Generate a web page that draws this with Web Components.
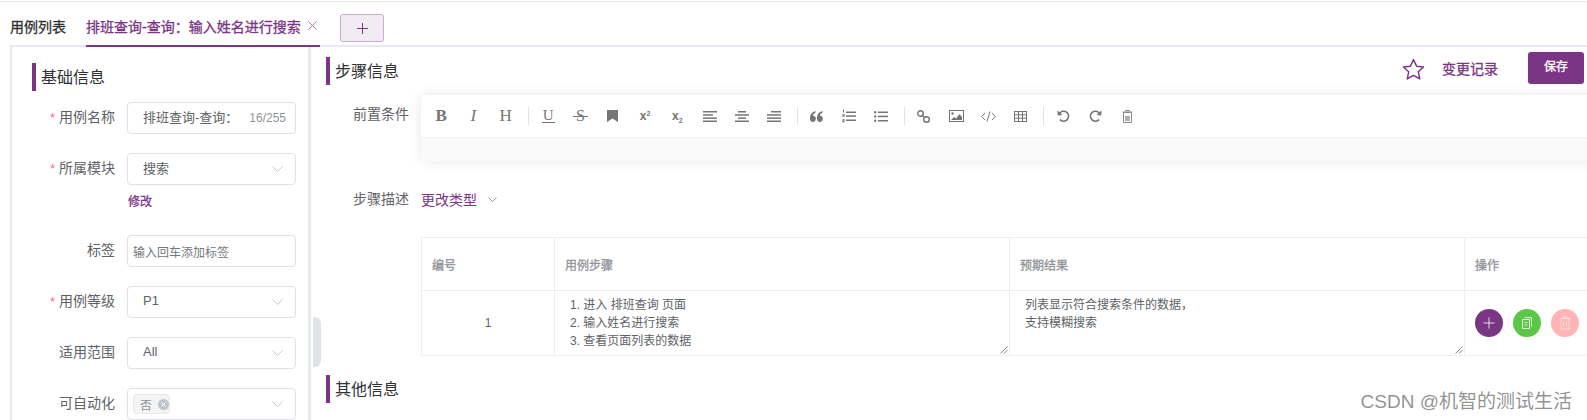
<!DOCTYPE html>
<html lang="zh-CN">
<head>
<meta charset="utf-8">
<title>用例详情</title>
<style>
	html, body { margin: 0; height: 420px; overflow: hidden; background: #fff; }
	body {
		position: relative;
		font-family: "Liberation Sans", "Noto Sans CJK SC", sans-serif;
		font-size: 14px;
		color: #606266;
	}
	case-main { height: 373px; }
</style>
</head>
<body>
<case-tabs></case-tabs>
<case-main>
	<case-side slot="side">
		<section-title>基础信息</section-title>
		<form-row label="用例名称" required>
			<field-box counter="16/255">排班查询-查询：</field-box>
		</form-row>
		<form-row label="所属模块" required>
			<field-box select>搜索</field-box>
			<div slot="extra" class="edit">修改</div>
		</form-row>
		<form-row label="标签">
			<field-box placeholder>输入回车添加标签</field-box>
		</form-row>
		<form-row label="用例等级" required>
			<field-box select>P1</field-box>
		</form-row>
		<form-row label="适用范围">
			<field-box select>All</field-box>
		</form-row>
		<form-row label="可自动化">
			<field-box select tag>否</field-box>
		</form-row>
	</case-side>
	<case-detail slot="detail"></case-detail>
</case-main>
<water-mark>CSDN @机智的测试生活</water-mark>

<script>
const PURPLE = '#7b3585';
// the CJK font has no medium weight here, a thin stroke gets close to it
const MEDIUM = '-webkit-text-stroke: 0.3px currentColor;';

class CaseTabs extends HTMLElement {
	connectedCallback() {
		this.attachShadow({ mode: 'open' });
		this.shadowRoot.innerHTML = `
			<style>
				:host { display: block; margin-top: 1px; border-top: 1px solid #e9e9ec; }
				.bar {
					display: flex;
					height: 45px;
					box-sizing: border-box;
					margin-left: 10px;
					border-bottom: 2px solid #e7e8f0;
				}
				.tab {
					display: flex;
					align-items: center;
					box-sizing: border-box;
					height: 45px;
					padding-top: 5px;
					padding-bottom: 2px;
					${MEDIUM}
					color: #303133;
				}
				.active {
					margin-left: 20px;
					width: 234px;
					gap: 7px;
					color: ${PURPLE};
					border-bottom: 2px solid ${PURPLE};
					padding-top: 6px;
				}
				.add {
					display: flex;
					align-items: center;
					justify-content: center;
					box-sizing: border-box;
					width: 44px;
					height: 28px;
					margin: 12px 0 0 20px;
					background: #f2ebf4;
					border: 1px solid #c9a9d0;
					border-radius: 3px;
				}
			</style>
			<div class="bar">
				<div class="tab">用例列表</div>
				<div class="tab active">
					<span>排班查询-查询：输入姓名进行搜索</span>
					<svg width="9" height="9" viewBox="0 0 9 9" fill="none" stroke="#a67bae" stroke-width="1"><path d="M.5.5l8 8M8.5.5l-8 8"/></svg>
				</div>
				<div class="add">
					<svg width="11" height="11" viewBox="0 0 11 11" fill="none" stroke="${PURPLE}" stroke-width="1"><path d="M5.5 0v11M0 5.5h11"/></svg>
				</div>
			</div>
		`;
	}
}

class CaseMain extends HTMLElement {
	connectedCallback() {
		this.attachShadow({ mode: 'open' });
		this.shadowRoot.innerHTML = `
			<style>
				:host { display: flex; overflow: hidden; }
				.handle {
					flex: none;
					width: 8px;
					height: 50px;
					margin: 270px 0 0 2px;
					background: #dfe3e8;
					border-radius: 2px 8px 8px 2px;
				}
				::slotted(case-detail) { flex: 1; min-width: 0; }
			</style>
			<slot name="side"></slot>
			<div class="handle"></div>
			<slot name="detail"></slot>
		`;
	}
}

class CaseSide extends HTMLElement {
	connectedCallback() {
		this.attachShadow({ mode: 'open' });
		this.shadowRoot.innerHTML = `
			<style>
				:host {
					display: block;
					flex: none;
					box-sizing: border-box;
					width: 301px;
					margin-left: 10px;
					padding-top: 16px;
					border-left: 2px solid #e8eaee;
					border-right: 3px solid #e8eaee;
					--title-indent: 20px;
				}
				::slotted(section-title) { margin-bottom: 11px; }
			</style>
			<slot></slot>
		`;
		// 修改 lives in light DOM, style it here
		const edit = this.querySelector('.edit');
		if (edit) {
			Object.assign(edit.style, {
				height: '31px', paddingTop: '8px', boxSizing: 'border-box', lineHeight: '18px',
				fontSize: '12px', webkitTextStroke: '0.3px currentColor', color: PURPLE, paddingLeft: '1px'
			});
		}
	}
}

class SectionTitle extends HTMLElement {
	connectedCallback() {
		this.attachShadow({ mode: 'open' });
		this.shadowRoot.innerHTML = `
			<style>
				:host {
					display: block;
					margin-left: var(--title-indent, 0);
					padding-left: 5px;
					height: 28px;
					font-size: 16px;
					color: #303133;
					border-left: 4px solid ${PURPLE};
				}
				span { display: block; line-height: 28px; padding-top: 1px; }
			</style>
			<span><slot></slot></span>
		`;
	}
}

class FormRow extends HTMLElement {
	connectedCallback() {
		this.attachShadow({ mode: 'open' });
		const star = this.hasAttribute('required') ? '<i>*</i>' : '';
		this.shadowRoot.innerHTML = `
			<style>
				:host {
					display: grid;
					grid-template-columns: 103px 169px;
					column-gap: 12px;
					margin-bottom: 19px;
				}
				label {
					height: 32px;
					line-height: 30px;
					text-align: right;
					color: #606266;
				}
				i { font-style: normal; color: #f56c6c; margin-right: 4px; font-size: 12px; }
				.extra { grid-column: 2; }
			</style>
			<label>${star}${this.getAttribute('label')}</label>
			<div><slot></slot></div>
			<div class="extra"><slot name="extra"></slot></div>
		`;
	}
}

class FieldBox extends HTMLElement {
	connectedCallback() {
		this.attachShadow({ mode: 'open' });
		const isSelect = this.hasAttribute('select');
		const counter = this.getAttribute('counter');
		const isTag = this.hasAttribute('tag');
		const isHolder = this.hasAttribute('placeholder');
		const text = isTag
			? `<span class="tag"><slot></slot><span class="x"><svg width="5" height="5" viewBox="0 0 5 5" stroke="#fff" fill="none"><path d="M.5.5l4 4M4.5.5l-4 4"/></svg></span></span>`
			: `<span class="txt"><slot></slot></span>`;
		this.shadowRoot.innerHTML = `
			<style>
				:host {
					display: flex;
					align-items: center;
					box-sizing: border-box;
					height: 32px;
					padding: 0 9px 0 ${isHolder || isTag ? 5 : 15}px;
					background: #fff;
					border: 1px solid #dfe0e8;
					border-radius: 4px;
					font-size: ${isHolder ? 12 : 13}px;
					color: ${isHolder ? '#75777c' : '#606266'};
				}
				.txt { flex: 1; white-space: nowrap; padding-bottom: ${isHolder ? 0 : 3}px; }
				.count { font-size: 12px; color: #909399; }
				.tag {
					display: flex;
					align-items: center;
					box-sizing: border-box;
					width: 37px;
					height: 20px;
					padding-left: 6px;
					font-size: 12px;
					color: #909399;
					background: #f4f4f5;
					border: 1px solid #e9e9eb;
					border-radius: 4px;
				}
				.x {
					display: flex;
					align-items: center;
					justify-content: center;
					width: 11px;
					height: 11px;
					margin-left: 6px;
					background: #c0c4cc;
					border-radius: 50%;
				}
				svg.arrow { margin: 0 3px 0 auto; flex: none; }
			</style>
			${text}
			${counter ? `<span class="count">${counter}</span>` : ''}
			${isSelect ? '<svg class="arrow" width="11" height="6" viewBox="0 0 11 6" fill="none" stroke="#c6c9d1"><path d="M.5.5l5 5 5-5"/></svg>' : ''}
		`;
	}
}

const ICON_COLOR = '#757575';
const svg = (w, h, body, extra = '') =>
	`<svg width="${w}" height="${h}" viewBox="0 0 ${w} ${h}" ${extra}>${body}</svg>`;
const lines = (rows) => rows.map(([x, y, l]) => `<rect x="${x}" y="${y}" width="${l}" height="1.5"/>`).join('');

const TOOL_ICONS = {
	b: `<span style="font:700 17px 'Liberation Serif',serif">B</span>`,
	i: `<span style="font:italic 17px 'Liberation Serif',serif">I</span>`,
	h: `<span style="font:17px 'Liberation Serif',serif">H</span>`,
	u: `<span style="font:15px 'Liberation Serif',serif;border-bottom:1.5px solid;line-height:13px;padding:0 1px">U</span>`,
	s: `<span style="font:16px 'Liberation Serif',serif;position:relative">S<span style="position:absolute;left:-3px;right:-3px;top:9px;height:1px;background:currentColor"></span></span>`,
	mark: svg(11, 12, '<path d="M0 0h11v12L5.500 8.500 0 12z"/>', `fill="${ICON_COLOR}"`),
	sup: `<span style="font:700 12px 'Liberation Sans',sans-serif">x<sup style="font-size:7px;vertical-align:4px;line-height:0">2</sup></span>`,
	sub: `<span style="font:700 12px 'Liberation Sans',sans-serif">x<sub style="font-size:7px;vertical-align:-3px;line-height:0">2</sub></span>`,
	left: svg(14, 11, lines([[0, 0, 14], [0, 3.2, 10], [0, 6.4, 14], [0, 9.500, 14]]), `fill="${ICON_COLOR}"`),
	center: svg(14, 11, lines([[3, 0, 8], [0, 3.2, 14], [3, 6.4, 8], [0, 9.500, 14]]), `fill="${ICON_COLOR}"`),
	right: svg(14, 11, lines([[4, 0, 10], [0, 3.2, 14], [0, 6.4, 14], [0, 9.500, 14]]), `fill="${ICON_COLOR}"`),
	quote: svg(13, 11, '<path d="M0 7.500C0 3.500 2 .8 5.500 0v1.800C3.900 2.500 3 3.500 2.900 4.700 4.700 4.600 5.800 5.900 5.800 7.800 5.800 9.700 4.500 11 2.900 11 1 11 0 9.500 0 7.500zM7 7.500C7 3.500 9 .8 12.500 0v1.800C10.900 2.500 10 3.500 9.900 4.700 11.700 4.600 12.800 5.900 12.800 7.800 12.800 9.700 11.500 11 9.900 11 8 11 7 9.500 7 7.500z"/>', `fill="${ICON_COLOR}"`),
	ol: svg(14, 14, lines([[4, 2.5, 10], [4, 6.3, 10], [4, 10.5, 10]]) +
		'<rect x="1" y="0.500" width="1" height="3"/><rect x="0.300" y="5" width="2.400" height="3" opacity=".75"/><rect x="0.300" y="10" width="2.400" height="3.500" opacity=".75"/>', `fill="${ICON_COLOR}"`),
	ul: svg(14, 11, lines([[4, 0.500, 10], [4, 4.700, 10], [4, 9, 10]]) +
		'<circle cx="1.200" cy="1.200" r="1.200"/><circle cx="1.200" cy="5.400" r="1.200"/><circle cx="1.200" cy="9.700" r="1.200"/>', `fill="${ICON_COLOR}"`),
	link: svg(13, 13, '<circle cx="3.500" cy="3.500" r="2.800"/><circle cx="9.500" cy="9.500" r="2.800"/><path d="M5.500 5.500l2 2"/>', `fill="none" stroke="${ICON_COLOR}" stroke-width="1.400"`),
	image: svg(15, 12, `<rect x=".5" y=".5" width="14" height="11" fill="none" stroke="${ICON_COLOR}"/><path d="M2 10l3-3 2 1.500L10.500 4 13 7v3z" fill="${ICON_COLOR}"/><circle cx="3.500" cy="3.500" r="1.200" fill="${ICON_COLOR}"/>`),
	code: svg(15, 11, '<path d="M4 2L.7 5.500 4 9M11 2l3.300 3.500L11 9M9 .5L6 10.500"/>', `fill="none" stroke="${ICON_COLOR}"`),
	table: svg(13, 11, '<rect x=".5" y=".5" width="12" height="10"/><path d="M.5 3.800h12M.5 7.200h12M4.500.5v10M8.500.5v10"/>', `fill="none" stroke="${ICON_COLOR}"`),
	undo: svg(13, 12, `<path d="M2.300 3.600A5 5 0 1 1 2.800 9.500" fill="none" stroke="${ICON_COLOR}" stroke-width="1.600"/><path d="M.5 .5l.3 5 4.700-.6z" fill="${ICON_COLOR}"/>`),
	redo: svg(13, 12, `<path d="M10.700 3.600A5 5 0 1 0 10.200 9.500" fill="none" stroke="${ICON_COLOR}" stroke-width="1.600"/><path d="M12.500 .5l-.3 5-4.700-.6z" fill="${ICON_COLOR}"/>`),
	trash: svg(11, 13, '<path d="M3.500 1.500V.5h4v1M.5 2h10M1.500 2.500h8v10h-8z" fill="none" stroke="#8c8c8c"/><rect x="3" y="6" width="5" height="5" fill="#b0b0b0"/>')
};

class RichEditor extends HTMLElement {
	connectedCallback() {
		this.attachShadow({ mode: 'open' });
		const groups = [
			['b', 'i', 'h'],
			['u', 's', 'mark', 'sup', 'sub', 'left', 'center', 'right'],
			['quote', 'ol', 'ul'],
			['link', 'image', 'code', 'table'],
			['undo', 'redo', 'trash']
		];
		const toolbar = groups
			.map((g) => g.map((name) => `<span class="btn">${TOOL_ICONS[name]}</span>`).join(''))
			.join('<span class="sep"></span>');
		this.shadowRoot.innerHTML = `
			<style>
				:host {
					display: block;
					height: 66px;
					box-shadow: 0 0 12px rgba(0, 0, 0, 0.09);
				}
				.bar {
					display: flex;
					align-items: center;
					height: 42px;
					padding-left: 4px;
					background: #fff;
					border-bottom: 1px solid #f0f0f6;
					color: ${ICON_COLOR};
				}
				.btn {
					display: flex;
					align-items: center;
					justify-content: center;
					flex: none;
					width: 32.3px;
					height: 20px;
				}
				.sep {
					flex: none;
					width: 1px;
					height: 18px;
					margin: 0 3px 0 6.2px;
					background: #e2e2e2;
				}
				.body { height: 23px; background: #fafafa; }
			</style>
			<div class="bar">${toolbar}</div>
			<div class="body"></div>
		`;
	}
}

class StepTable extends HTMLElement {
	connectedCallback() {
		this.attachShadow({ mode: 'open' });
		const grip = '<svg class="grip" width="8" height="8" viewBox="0 0 8 8" fill="none" stroke="#666" stroke-width=".8"><path d="M.5 7.500l7-7M4 7.500l3.500-3.500"/></svg>';
		this.shadowRoot.innerHTML = `
			<style>
				:host {
					display: grid;
					grid-template-columns: 133px 455px 455px 140px;
					grid-template-rows: 53px 65px;
					font-size: 12px;
					color: #606266;
					border-top: 1px solid #ebeef5;
					border-left: 1px solid #ebeef5;
				}
				.c {
					position: relative;
					box-sizing: border-box;
					border-bottom: 1px solid #ebeef5;
					border-right: 1px solid #ebeef5;
				}
				.h {
					display: flex;
					align-items: center;
					padding: 0 0 0 10px;
					${MEDIUM}
					color: #909399;
				}
				.num { display: flex; align-items: center; justify-content: center; }
				.t { padding: 5px 0 0 15px; line-height: 18px; }
				.grip { position: absolute; right: 1px; bottom: 1px; }
				.ops { display: flex; align-items: center; gap: 10px; padding: 0 0 0 10px; }
			</style>
			<div class="c h">编号</div>
			<div class="c h">用例步骤</div>
			<div class="c h">预期结果</div>
			<div class="c h">操作</div>
			<div class="c num">1</div>
			<div class="c t">1. 进入 排班查询 页面<br>2. 输入姓名进行搜索<br>3. 查看页面列表的数据${grip}</div>
			<div class="c t">列表显示符合搜索条件的数据，<br>支持模糊搜索${grip}</div>
			<div class="c ops">
				<round-btn color="${PURPLE}" icon="plus"></round-btn>
				<round-btn color="#5cc646" icon="copy"></round-btn>
				<round-btn color="#ffb5b5" icon="del"></round-btn>
			</div>
		`;
	}
}

class RoundBtn extends HTMLElement {
	connectedCallback() {
		this.attachShadow({ mode: 'open' });
		const icons = {
			plus: '<path d="M7 1.500v11M1.500 7h11"/>',
			copy: '<path d="M4.500 1.500h7v9M2.500 3.500h7v9h-7zM4.500 6.500h3M4.500 9h3"/>',
			del: '<path d="M5 2V1h4v1M2 2.500h10M3 3v10h8V3M5.500 5.500v5M8.500 5.500v5"/>'
		};
		const alpha = this.getAttribute('icon') === 'del' ? 0.5 : 0.8;
		this.shadowRoot.innerHTML = `
			<style>
				:host {
					display: flex;
					align-items: center;
					justify-content: center;
					flex: none;
					width: 28px;
					height: 28px;
					border-radius: 50%;
					background: ${this.getAttribute('color')};
				}
			</style>
			<svg width="14" height="14" viewBox="0 0 14 14" fill="none" stroke="rgba(255,255,255,${alpha})" stroke-width="1">${icons[this.getAttribute('icon')]}</svg>
		`;
	}
}

class CaseDetail extends HTMLElement {
	connectedCallback() {
		this.attachShadow({ mode: 'open' });
		this.shadowRoot.innerHTML = `
			<style>
				:host { display: block; overflow: hidden; padding-left: 5px; }
				.head { display: flex; justify-content: space-between; height: 48px; }
				.head section-title { margin-top: 10px; }
				.actions { display: flex; align-items: center; height: 32px; margin: 5px 3px 0 0; }
				.log { margin: 0 30px 0 17px; font-size: 14px; ${MEDIUM} color: ${PURPLE}; }
				.save {
					width: 56px;
					height: 32px;
					line-height: 30px;
					text-align: center;
					font-size: 12px;
					${MEDIUM}
					color: #fff;
					background: ${PURPLE};
					border-radius: 3px;
				}
				.row { display: grid; grid-template-columns: 83px minmax(0, 1fr); column-gap: 12px; }
				.lab { line-height: 38px; text-align: right; white-space: nowrap; }
				rich-editor { margin-right: -40px; }
				.type {
					display: flex;
					align-items: center;
					gap: 11px;
					height: 38px;
					color: ${PURPLE};
				}
				.steps { margin-top: 19px; height: 40px; }
				step-table { margin: 17px 0 19px 95px; width: max-content; }
			</style>
			<div class="head">
				<section-title>步骤信息</section-title>
				<div class="actions">
					<svg width="23" height="23" viewBox="0 0 22 22" fill="none" stroke="${PURPLE}" stroke-width="1.400" stroke-linejoin="round" style="margin-top:3px"><path d="M11 1.500l2.900 6.300 6.700.8-5 4.600 1.400 6.800-6-3.400-6 3.400 1.400-6.800-5-4.600 6.700-.8z"/></svg>
					<span class="log">变更记录</span>
					<div class="save">保存</div>
				</div>
			</div>
			<div class="row">
				<div class="lab">前置条件</div>
				<rich-editor></rich-editor>
			</div>
			<div class="row steps">
				<div class="lab">步骤描述</div>
				<div class="type">更改类型
					<svg width="9" height="5" viewBox="0 0 9 5" fill="none" stroke="#8a8d94" stroke-width=".9"><path d="M.5.500l4 4 4-4"/></svg>
				</div>
			</div>
			<step-table></step-table>
			<section-title>其他信息</section-title>
		`;
	}
}

class WaterMark extends HTMLElement {
	connectedCallback() {
		this.attachShadow({ mode: 'open' });
		this.shadowRoot.innerHTML = `
			<style>
				:host {
					position: absolute;
					right: 15px;
					top: 390px;
					font-size: 19px;
					line-height: 24px;
					color: rgba(110, 110, 110, 0.75);
					white-space: nowrap;
				}
			</style>
			<slot></slot>
		`;
	}
}

customElements.define('section-title', SectionTitle);
customElements.define('field-box', FieldBox);
customElements.define('form-row', FormRow);
customElements.define('round-btn', RoundBtn);
customElements.define('rich-editor', RichEditor);
customElements.define('step-table', StepTable);
customElements.define('case-tabs', CaseTabs);
customElements.define('case-side', CaseSide);
customElements.define('case-detail', CaseDetail);
customElements.define('case-main', CaseMain);
customElements.define('water-mark', WaterMark);
</script>
</body>
</html>
